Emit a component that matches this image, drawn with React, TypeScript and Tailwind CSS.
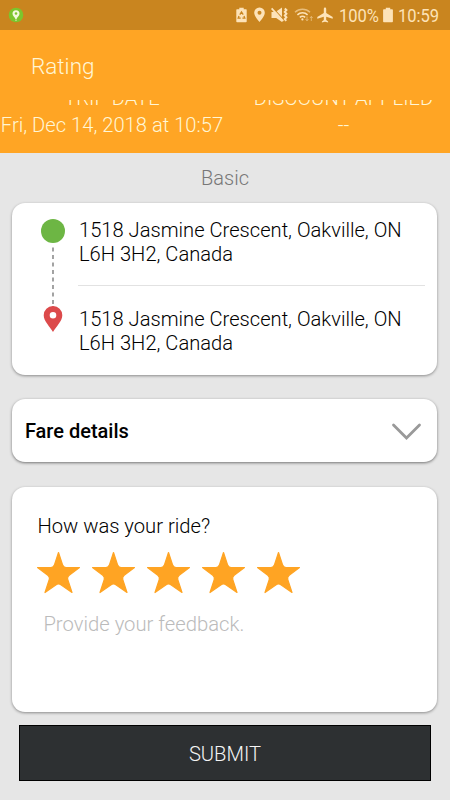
import { useState } from "react";

const ADDRESS = ["1518 Jasmine Crescent, Oakville, ON", "L6H 3H2, Canada"];

function StatusBar() {
  return (
    <div className="h-[30px] bg-[#c9851f] flex items-center text-[#fde3b8]">
      <svg className="ml-2 h-4 w-4" viewBox="0 0 16 16">
        <circle cx="8" cy="8" r="7.3" fill="#7cc52d" />
        <path d="M8 3.2a3.5 3.5 0 0 0-3.5 3.5c0 2.2 2.4 3.3 3.1 5.6h.8c.7-2.3 3.1-3.4 3.1-5.6A3.5 3.5 0 0 0 8 3.2z" fill="#f4f9dd" />
        <circle cx="8" cy="6.5" r="1.3" fill="#7cc52d" />
        <circle cx="8" cy="13.2" r=".6" fill="#f4f9dd" />
      </svg>

      {/* Battery saver */}
      <svg className="ml-[212px] h-4 w-[11px]" viewBox="0 0 11 16" fill="currentColor">
        <path d="M3.3.7h4.4v1.6h2.4c.4 0 .6.3.6.6v11.5c0 .5-.3.8-.8.8H1.1c-.5 0-.8-.3-.8-.8V2.9c0-.3.2-.6.6-.6h2.4z" />
        <path d="M3.8 7.6 5.5 5l1.7 2.6M8 9l.8 2.2H6.4M4.7 11.2H2.2L3 9" fill="none" stroke="#c9851f" strokeWidth="1.3" />
      </svg>

      {/* Location */}
      <svg className="ml-[7px] h-4 w-[11px]" viewBox="0 0 11 16">
        <path fillRule="evenodd" fill="currentColor" d="M5.5.5A5.2 5.2 0 0 0 .2 5.8C.2 9.4 5.5 15 5.5 15s5.3-5.6 5.3-9.2A5.2 5.2 0 0 0 5.5.5zm0 3.3a2 2 0 1 1 0 4 2 2 0 0 1 0-4z" />
      </svg>

      {/* Muted, vibrate */}
      <svg className="ml-[6px] h-4 w-[17px]" viewBox="0 0 17 16">
        <path d="M.5 5h4l6.5-4.5v14.5L5.2 11H.5z" fill="currentColor" />
        <path d="M1.8.8L12.4 12.4" stroke="#c9851f" strokeWidth="1.1" />
        <path d="M.6 1.4l11.6 12.8" stroke="currentColor" strokeWidth="1.8" />
        <path d="M13.8 1.5l1.6 1.6-1.6 1.8 1.6 1.8-1.6 1.8 1.6 1.8-1.6 1.8 1.4 1.7" fill="none" stroke="currentColor" strokeWidth="2" />
      </svg>

      {/* Wifi with traffic arrows */}
      <svg className="ml-[6px] h-4 w-[20px]" viewBox="0 0 20 16" fill="none" stroke="currentColor" strokeWidth="1.5">
        <path d="M1 5.2a11 11 0 0 1 15 0" opacity=".6" />
        <path d="M3.4 7.9a7.4 7.4 0 0 1 10.2 0M5.8 10.4a4 4 0 0 1 5.4 0" />
        <circle cx="8.4" cy="12.4" r="1.1" fill="currentColor" stroke="none" />
        <path d="M13 9.5v4.2M11.6 12.2l1.4 1.5 1.4-1.5M17.3 14V9.5M15.9 11l1.4-1.5 1.4 1.5" strokeWidth="1" opacity=".5" />
      </svg>

      {/* Airplane mode */}
      <svg className="ml-[3px] h-4 w-4" viewBox="0 0 16 16" fill="currentColor">
        <path d="M8 .6c.8 0 1.2.7 1.2 1.5v4L15.7 10v1.7L9.2 9.8v3.3l1.9 1.3v1.1L8 14.7l-3.1.8v-1.1l1.9-1.3V9.8L.3 11.7V10l6.5-3.9v-4C6.8 1.3 7.2.6 8 .6z" />
      </svg>

      <span className="ml-[6px] w-[40px] shrink-0 whitespace-nowrap">
        <span className="inline-block origin-left scale-x-[0.87] pt-px text-[19px] font-normal leading-[30px]">100%</span>
      </span>
      <svg className="ml-[4px] h-4 w-[10px] shrink-0" viewBox="0 0 10 16" fill="currentColor">
        <path d="M2.8.7h4.4v1.6h2c.4 0 .7.3.7.7v11.4c0 .5-.3.8-.8.8H.9c-.5 0-.8-.3-.8-.8V3c0-.4.3-.7.7-.7h2z" />
      </svg>
      <span className="ml-[5px] w-[46px] whitespace-nowrap">
        <span className="inline-block origin-left scale-x-[0.87] pt-px text-[19px] font-normal leading-[30px]">10:59</span>
      </span>
    </div>
  );
}

function Star({ filled, onClick }: { filled: boolean; onClick: () => void }) {
  return (
    <button onClick={onClick} className="h-[43px] w-[45px]" aria-label="Rate">
      <svg className="h-[43px] w-[45px]" viewBox="0 0 45 43">
        <path
          d="M22.5 1.5L26.5 13.8Q27.4 16.5 30 16.5L43.5 16.5L33.2 24.3Q31 26 31.8 28.6L36 41.5L25.2 33.9Q22.5 32 19.8 33.9L9 41.5L13.2 28.6Q14 26 11.8 24.3L1.5 16.5L15 16.5Q17.6 16.5 18.5 13.8Z"
          fill={filled ? "#ffa423" : "#d4d4d4"}
          stroke={filled ? "#ffa423" : "#d4d4d4"}
          strokeWidth="1.2"
          strokeLinejoin="round"
        />
      </svg>
    </button>
  );
}

function Address() {
  return (
    <div className="text-[20.15px] leading-6 whitespace-nowrap">
      {ADDRESS.map((line) => (
        <div key={line}>{line}</div>
      ))}
    </div>
  );
}

export default function App() {
  const [rating, setRating] = useState(5);

  return (
    <div className="h-[800px] w-[450px] overflow-hidden bg-[#e6e6e6] font-['Roboto',sans-serif] font-light text-black">
      <StatusBar />

      {/* Header */}
      <div className="h-[70px] bg-[#ffa524] pl-[31px] pt-[21px] text-[22.5px] leading-[30px] text-[#fff6d5]">
        Rating
      </div>

      {/* Trip summary, scrolled partly under the header */}
      <div className="grid h-[52.5px] grid-cols-[224px_226px] overflow-hidden bg-[#ffa524] text-center text-[20.2px] leading-[27px] text-[#fff6d5]">
        <div className="-mt-[15px] whitespace-nowrap">
          <div>TRIP DATE</div>
          <div>Fri, Dec 14, 2018 at 10:57</div>
        </div>
        <div className="-mt-[15px] pl-[13px] whitespace-nowrap">
          <div>DISCOUNT APPLIED</div>
          <div>--</div>
        </div>
      </div>

      <div className="h-[50.5px] pt-[10px] text-center text-[20px] leading-[30px] text-[#777]">Basic</div>

      {/* Route */}
      <div className="ml-[12.4px] mr-[12.6px] flex h-[171.5px] rounded-[13px] bg-white pl-[27.6px] shadow-[0_1px_3px_rgba(0,0,0,0.4)]">
        <div className="flex w-[26px] flex-col items-center pt-4">
          <div className="h-6 w-6 shrink-0 rounded-full bg-[#6db644]" />
          <svg className="h-[63px] w-[2px]" viewBox="0 0 2 63">
            <path d="M1 4.5V63" stroke="#999" strokeWidth="1.8" strokeDasharray="4 3.5" />
          </svg>
          <svg className="h-[26px] w-5 shrink-0" viewBox="0 0 20 26">
            <path fillRule="evenodd" fill="#dc4a4b" d="M10 0A9.2 9.2 0 0 0 .7 9.3C.7 15.5 7 20.5 10 26c3-5.5 9.3-10.5 9.3-16.7A9.2 9.2 0 0 0 10 0zm0 6a3.3 3.3 0 1 1 0 6.6A3.3 3.3 0 0 1 10 6z" />
          </svg>
        </div>
        <div className="ml-[13px] flex-1 pt-[15px]">
          <Address />
          <div className="mt-[19px] mb-[21px] mr-[12.4px] -ml-px h-px bg-[#e2e2e2]" />
          <Address />
        </div>
      </div>

      {/* Fare details */}
      <div className="ml-[12.4px] mr-[12.6px] mt-[24.5px] flex h-[62.5px] items-center justify-between rounded-[13px] bg-white pl-[12.5px] pr-[15.6px] shadow-[0_1px_3px_rgba(0,0,0,0.5)]">
        <span className="pt-[2px] text-[20px] font-medium">Fare details</span>
        <svg className="mt-[2px] h-[20px] w-[31px]" viewBox="0 0 31 20" fill="none">
          <path d="M2.5 4L15.5 17L28.5 4" stroke="#999" strokeWidth="2.8" strokeLinecap="round" />
        </svg>
      </div>

      {/* Feedback */}
      <div className="ml-[12.4px] mr-[12.6px] mt-[25px] h-[225.5px] rounded-[13px] bg-white pt-[24px] pl-[24px] shadow-[0_1px_3px_rgba(0,0,0,0.4)]">
        <div className="pl-px text-[20.2px] leading-[30px]">How was your ride?</div>
        <div className="mt-[10px] flex gap-[10px]">
          {[1, 2, 3, 4, 5].map((n) => (
            <Star key={n} filled={n <= rating} onClick={() => setRating(n)} />
          ))}
        </div>
        <textarea
          placeholder="Provide your feedback."
          className="mt-[15.5px] ml-[7px] block h-[90px] w-[370px] resize-none text-[20.25px] leading-[30px] outline-none placeholder:text-[#bbb]"
        />
      </div>

      <button className="mt-[12.5px] ml-[19px] block h-14 w-[412px] border border-black bg-[#2d3032] pt-[3px] text-[20.2px] text-[#f4f4f4]">
        SUBMIT
      </button>
    </div>
  );
}
